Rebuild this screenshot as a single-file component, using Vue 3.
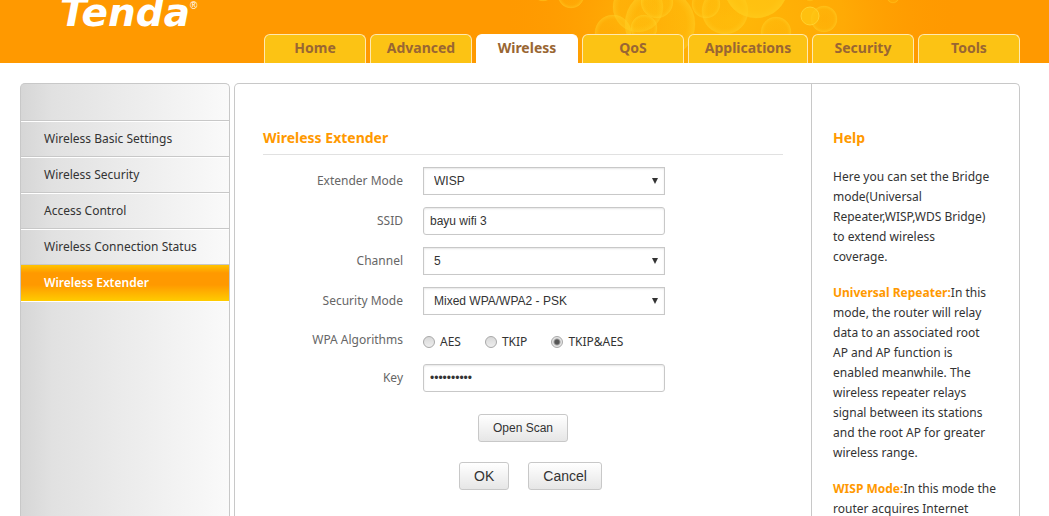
<script setup>
import { ref } from 'vue'

const tabs = ['Home', 'Advanced', 'Wireless', 'QoS', 'Applications', 'Security', 'Tools']
const activeTab = ref('Wireless')

const menu = [
  'Wireless Basic Settings',
  'Wireless Security',
  'Access Control',
  'Wireless Connection Status',
  'Wireless Extender',
]
const activeItem = ref('Wireless Extender')

const mode = ref('WISP')
const ssid = ref('bayu wifi 3')
const channel = ref('5')
const security = ref('Mixed WPA/WPA2 - PSK')
const algorithms = ['AES', 'TKIP', 'TKIP&AES']
const algorithm = ref('TKIP&AES')
const key = ref('password12')

const bubbles = [
  [43, -10, 11], [71, -5, 13], [138, 7, 25], [160, 24, 35], [157, 2, 16],
  [113, 33, 18], [144, 28, 13], [225, 11, 23], [206, 4, 14], [256, -14, 32],
  [276, 32, 15], [324, 19, 13], [310, -4, 5], [393, -3, 6],
]
</script>

<template>
  <div class="page">
    <header class="header">
      <svg class="bubbles" viewBox="0 0 500 63" width="500" height="63" aria-hidden="true">
        <defs>
          <radialGradient id="glow">
            <stop offset="0" stop-color="#ffb808" />
            <stop offset="0.5" stop-color="#ffae06" stop-opacity="0.8" />
            <stop offset="1" stop-color="#ff9900" stop-opacity="0" />
          </radialGradient>
          <radialGradient id="bubble">
            <stop offset="0" stop-color="#ffc814" stop-opacity="0.12" />
            <stop offset="0.75" stop-color="#ffc814" stop-opacity="0.22" />
            <stop offset="1" stop-color="#ffd42a" stop-opacity="0.5" />
          </radialGradient>
        </defs>
        <ellipse cx="230" cy="20" rx="230" ry="140" fill="url(#glow)" />
        <circle
          v-for="([x, y, r], i) in bubbles"
          :key="i"
          :cx="x"
          :cy="y"
          :r="r"
          fill="url(#bubble)"
          stroke="#ffd02a"
          stroke-opacity="0.15"
        />
        <circle cx="256" cy="-14" r="32" fill="#ffcc18" fill-opacity="0.5" />
        <circle cx="310" cy="16" r="9" fill="#ffc814" fill-opacity="0.7" stroke="#ffd838" stroke-opacity="0.8" />
      </svg>
      <a class="logo" href="#">Tenda<sup>®</sup></a>
      <nav class="tabs">
        <a
          v-for="t in tabs"
          :key="t"
          href="#"
          class="tab"
          :class="{ active: t === activeTab, wide: t === 'Applications' }"
          @click.prevent="activeTab = t"
        >{{ t }}</a>
      </nav>
    </header>

    <div class="body">
      <nav class="sidebar">
        <a
          v-for="m in menu"
          :key="m"
          href="#"
          class="item"
          :class="{ active: m === activeItem }"
          @click.prevent="activeItem = m"
        >{{ m }}</a>
        <div class="rest"></div>
      </nav>

      <div class="panel">
        <main class="content">
          <h1 class="title">Wireless Extender</h1>
          <form @submit.prevent>
            <div class="fields">
              <label class="label" for="mode">Extender Mode</label>
              <div class="select">
                <select id="mode" v-model="mode">
                  <option>WISP</option>
                  <option>Universal Repeater</option>
                  <option>WDS Bridge</option>
                </select>
              </div>

              <label class="label" for="ssid">SSID</label>
              <input id="ssid" v-model="ssid" class="text" type="text" />

              <label class="label" for="channel">Channel</label>
              <div class="select">
                <select id="channel" v-model="channel">
                  <option v-for="n in 13" :key="n">{{ n }}</option>
                </select>
              </div>

              <label class="label" for="security">Security Mode</label>
              <div class="select">
                <select id="security" v-model="security">
                  <option>Mixed WPA/WPA2 - PSK</option>
                </select>
              </div>

              <span id="alg" class="label">WPA Algorithms</span>
              <div class="radios" role="radiogroup" aria-labelledby="alg">
                <label v-for="a in algorithms" :key="a" class="radio">
                  <input v-model="algorithm" type="radio" name="alg" :value="a" />{{ a }}
                </label>
              </div>

              <label class="label" for="key">Key</label>
              <input id="key" v-model="key" class="text" type="password" />
            </div>

            <div class="scan"><button class="btn" type="button">Open Scan</button></div>
            <div class="actions">
              <button class="btn big" type="submit">OK</button>
              <button class="btn big" type="reset">Cancel</button>
            </div>
          </form>
        </main>

        <aside class="help">
          <h2 class="title">Help</h2>
          <p>Here you can set the Bridge mode(Universal Repeater,WISP,WDS Bridge) to extend wireless coverage.</p>
          <p><strong>Universal Repeater:</strong>In this mode, the router will relay data to an associated root AP and AP function is enabled meanwhile. The wireless repeater relays signal between its stations and the root AP for greater wireless range.</p>
          <p><span class="lead"><strong>WISP Mode:</strong>In this mode the</span> router acquires Internet</p>
        </aside>
      </div>
    </div>
  </div>
</template>

<style>
body {
  margin: 0;
  background: #fff;
}
</style>

<style scoped>
.page {
  display: flex;
  flex-direction: column;
  height: 100vh;
  overflow: hidden;
  color: #333;
  font: 12px/20px "Noto Sans", "Open Sans", sans-serif;
}
.page *,
.page *::before {
  box-sizing: border-box;
}
a {
  color: inherit;
  text-decoration: none;
}

.header {
  position: relative;
  display: flex;
  flex: none;
  justify-content: space-between;
  align-items: flex-end;
  height: 63px;
  padding: 0 29px 0 60px;
  background: #ff9900;
  overflow: hidden;
}
.bubbles {
  position: absolute;
  top: 0;
  right: 49px;
}
.logo {
  align-self: flex-start;
  display: flex;
  color: #fff;
  font: italic bold 39px/26px "DejaVu Sans", sans-serif;
}
.logo sup {
  font: 10px/12px "Liberation Sans", sans-serif;
}
.tabs {
  position: relative;
  display: flex;
  gap: 4px;
}
.tab {
  width: 102px;
  height: 29px;
  border: 1px solid #ffe9b0;
  border-bottom: 0;
  border-radius: 6px 6px 0 0;
  background: #fcc314;
  color: #996633;
  font-size: 14px;
  font-weight: bold;
  line-height: 26px;
  text-align: center;
}
.tab.wide {
  width: 120px;
}
.tab.active {
  border-color: #fff;
  background: #fff;
}

.body {
  display: flex;
  flex: 1;
  gap: 4px;
  min-height: 0;
  padding: 20px 29px 0 20px;
}
.sidebar {
  display: flex;
  flex-direction: column;
  flex: none;
  width: 210px;
  padding-top: 36px;
  border: 1px solid #c8c8c8;
  border-bottom: 0;
  border-radius: 5px 5px 0 0;
  background: linear-gradient(to right, #d6d6d6, #e1e1e1 15%, #fafafa);
}
.item {
  height: 36px;
  padding-left: 23px;
  border-top: 1px solid #c8c8c8;
  box-shadow: inset 0 1px #fff;
  line-height: 35px;
}
.item.active {
  height: 37px;
  background: linear-gradient(#ffc400, #ff9900 22%, #ff9900 55%, #ffcc00);
  box-shadow: none;
  color: #fff;
  font-weight: 600;
}
.rest {
  flex: 1;
  border-top: 1px solid #fff;
}

.panel {
  display: flex;
  flex: 1;
  min-width: 0;
  border: 1px solid #c8c8c8;
  border-bottom: 0;
  border-radius: 5px 5px 0 0;
}
.content {
  flex: 1;
  padding: 44px 28px 0;
}
.title {
  margin: 0;
  color: #ff9900;
  font-size: 14px;
  font-weight: bold;
  line-height: 20px;
}
.content .title {
  padding-bottom: 6px;
  border-bottom: 1px solid #e1e1e1;
}
.fields {
  display: grid;
  grid-template-columns: 140px 242px;
  grid-template-rows: repeat(4, 28px) 25px 28px;
  gap: 12px 20px;
  align-items: center;
  padding-top: 12px;
}
.label {
  color: #666;
  text-align: right;
}
.text,
.select select {
  display: block;
  width: 100%;
  height: 28px;
  margin: 0;
  border: 1px solid #c8c8c8;
  outline: 0;
  background: #fff;
  box-shadow: inset 0 1px 2px rgba(0, 0, 0, 0.1);
  color: #333;
  font: 12px/20px "Liberation Sans", Arial, sans-serif;
}
.text {
  padding: 0 6px;
  border-radius: 3px;
}
.select {
  position: relative;
}
.select select {
  appearance: none;
  padding: 0 20px 0 10px;
  border-radius: 0;
}
.select::before {
  content: "";
  position: absolute;
  top: 11px;
  right: 7px;
  border: 3px solid transparent;
  border-top: 6px solid #333;
  border-bottom: 0;
  pointer-events: none;
}
.radios {
  display: flex;
  gap: 24px;
  padding-top: 4px;
}
.radio {
  display: flex;
  align-items: center;
  gap: 5px;
  white-space: nowrap;
}
.radio input {
  appearance: none;
  width: 12px;
  height: 12px;
  margin: 0;
  border: 1px solid #a8a8a8;
  border-radius: 50%;
  background: linear-gradient(#d8d8d8, #eee);
}
.radio input:checked {
  background: radial-gradient(circle, #555 0 2px, #e4e4e4 4px);
}
.btn {
  height: 28px;
  padding: 0 14px;
  border: 1px solid #c8c8c8;
  border-radius: 3px;
  background: linear-gradient(#fff, #e6e6e6);
  color: #333;
  font: 12px/20px "Liberation Sans", Arial, sans-serif;
}
.btn.big {
  font-size: 14px;
}
.scan {
  display: flex;
  justify-content: center;
  padding-top: 22px;
}
.actions {
  display: flex;
  justify-content: center;
  gap: 19px;
  padding: 20px 0 0 15px;
}

.help {
  flex: none;
  width: 208px;
  padding: 44px 28px 0 21px;
  border-left: 1px solid #c8c8c8;
}
.help .title {
  margin-bottom: 19px;
}
.help p {
  margin: 0 0 16px;
}
.help strong {
  color: #ff9900;
}
.lead {
  white-space: nowrap;
}
</style>
